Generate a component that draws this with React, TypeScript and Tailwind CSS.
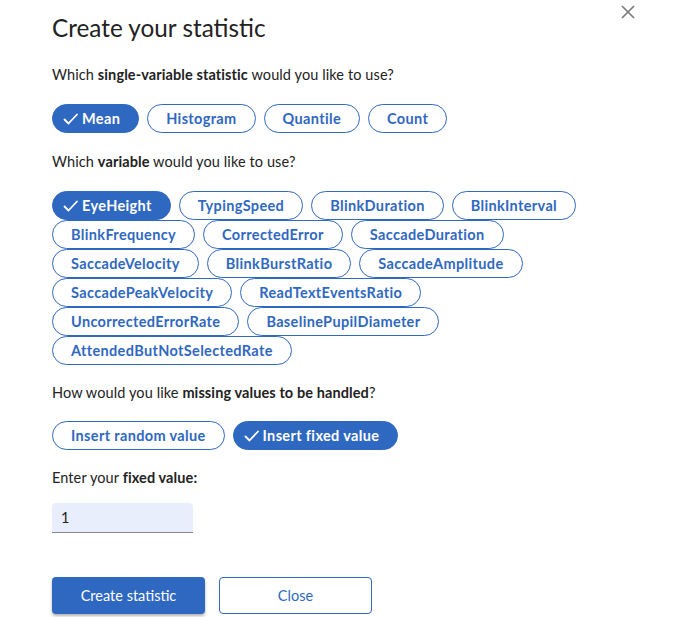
import { useState } from "react";

const stats = ["Mean", "Histogram", "Quantile", "Count"];
const variables = [
  "EyeHeight",
  "TypingSpeed",
  "BlinkDuration",
  "BlinkInterval",
  "BlinkFrequency",
  "CorrectedError",
  "SaccadeDuration",
  "SaccadeVelocity",
  "BlinkBurstRatio",
  "SaccadeAmplitude",
  "SaccadePeakVelocity",
  "ReadTextEventsRatio",
  "UncorrectedErrorRate",
  "BaselinePupilDiameter",
  "AttendedButNotSelectedRate",
];
const missing = ["Insert random value", "Insert fixed value"];

function Check() {
  return (
    <svg width="16" height="16" viewBox="0 0 16 16" fill="none" className="mr-[3px]">
      <path d="M1.5 8.5 L5.5 12.5 L14 3.5" stroke="currentColor" strokeWidth="1.8" strokeLinecap="round" strokeLinejoin="round" />
    </svg>
  );
}

function Chip({ label, active, onClick }: { label: string; active: boolean; onClick: () => void }) {
  return (
    <button
      onClick={onClick}
      className={
        active
          ? "flex h-[29px] items-center rounded-full border border-[#2f68c1] bg-[#2f68c1] pl-[10px] pr-[18px] text-[14.5px] font-bold tracking-[0.35px] text-white"
          : "flex h-[29px] items-center rounded-full border border-[#2f68c1] bg-white px-[18px] text-[14.5px] font-bold tracking-[0.35px] text-[#2f68c1]"
      }
    >
      {active && <Check />}
      {label}
    </button>
  );
}

export default function App() {
  const [stat, setStat] = useState("Mean");
  const [variable, setVariable] = useState("EyeHeight");
  const [handling, setHandling] = useState("Insert fixed value");
  const [value, setValue] = useState("1");

  return (
    <div className="relative h-[617px] w-[674px] bg-white px-[52px] pt-[13px] text-[#222] [font-family:Lato,'Noto_Sans',sans-serif]">
      <button className="absolute right-[38px] top-[4px] text-[#777]">
        <svg width="16" height="16" viewBox="0 0 16 16">
          <path d="M2 2 L14 14 M14 2 L2 14" stroke="currentColor" strokeWidth="1.6" />
        </svg>
      </button>

      <h1 className="text-[24.3px] leading-[30px] text-[#222]">Create your statistic</h1>

      <p className="mt-[22px] text-[14.5px] leading-[20px] tracking-[0.1px]">
        Which <b>single-variable statistic</b> would you like to use?
      </p>
      <div className="mt-[19px] flex gap-[8px]">
        {stats.map((s) => (
          <Chip key={s} label={s} active={stat === s} onClick={() => setStat(s)} />
        ))}
      </div>

      <p className="mt-[19px] text-[14.5px] leading-[20px] tracking-[0.1px]">
        Which <b>variable</b> would you like to use?
      </p>
      <div className="mt-[19px] flex w-[540px] flex-wrap gap-x-[8px] gap-y-0">
        {variables.map((v) => (
          <Chip key={v} label={v} active={variable === v} onClick={() => setVariable(v)} />
        ))}
      </div>

      <p className="mt-[18px] text-[14.5px] leading-[20px] tracking-[0.1px]">
        How would you like <b>missing values to be handled</b>?
      </p>
      <div className="mt-[18px] flex gap-[8px]">
        {missing.map((m) => (
          <Chip key={m} label={m} active={handling === m} onClick={() => setHandling(m)} />
        ))}
      </div>

      <p className="mt-[18px] text-[14.5px] leading-[20px] tracking-[0.1px]">
        Enter your <b>fixed value:</b>
      </p>
      <input
        value={value}
        onChange={(e) => setValue(e.target.value)}
        className="mt-[15px] h-[30px] w-[141px] rounded-t-[4px] border-b border-[#888] bg-[#e8eefb] px-[9px] text-[14.5px] text-[#222] outline-none"
      />

      <div className="mt-[44px] flex gap-[14px]">
        <button className="h-[37px] w-[153px] rounded-[4px] bg-[#2f68c1] text-[14.5px] text-white shadow-[0_2px_3px_rgba(0,0,0,0.3)]">
          Create statistic
        </button>
        <button className="h-[37px] w-[153px] rounded-[4px] border border-[#2f68c1] bg-white text-[14.5px] text-[#2f68c1]">
          Close
        </button>
      </div>
    </div>
  );
}
